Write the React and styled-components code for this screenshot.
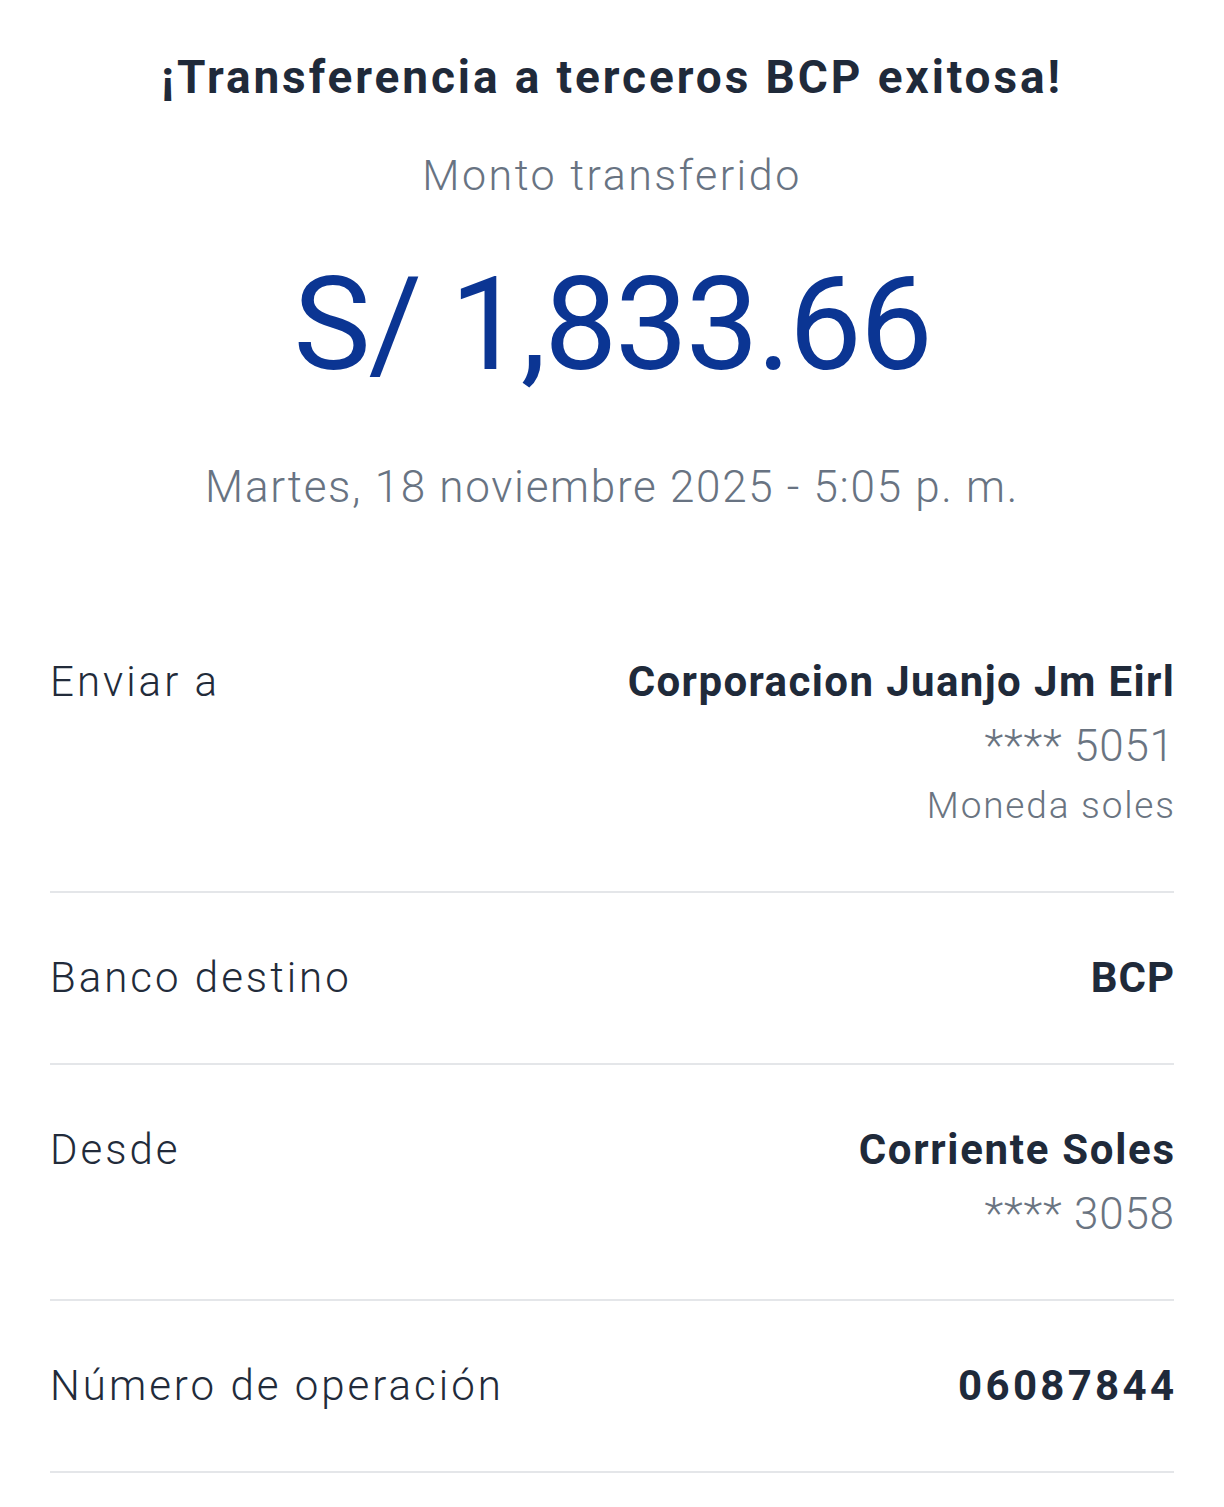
import styled, { createGlobalStyle } from "styled-components";

const GlobalStyle = createGlobalStyle`
  html, body {
    margin: 0;
    padding: 0;
    background: #ffffff;
  }
  body {
    font-family: Roboto, "Noto Sans", sans-serif;
    -webkit-font-smoothing: antialiased;
  }
`;

const Page = styled.main`
  width: 1224px;
  padding: 47px 50px 0;
  box-sizing: border-box;
  display: flex;
  flex-direction: column;
`;

const Head = styled.section`
  display: flex;
  flex-direction: column;
  align-items: center;
  text-align: center;
`;

const Title = styled.h1`
  margin: 0;
  font-size: 46px;
  line-height: 60px;
  font-weight: 700;
  color: #1f2a3a;
  letter-spacing: 2.9px;
`;

const Caption = styled.div`
  margin-top: ${(p) => p.$top}px;
  font-size: ${(p) => p.$size || 42}px;
  line-height: 60px;
  font-weight: 300;
  color: #687382;
  letter-spacing: ${(p) => p.$ls || 0}px;
`;

const Amount = styled.div`
  margin-top: 45px;
  font-size: 130px;
  line-height: 150px;
  font-weight: 400;
  color: #0b3593;
  letter-spacing: -2.2px;
`;

const List = styled.section`
  margin-top: 80px;
  display: flex;
  flex-direction: column;
`;

const Row = styled.div`
  display: flex;
  justify-content: space-between;
  align-items: flex-start;
  padding: 55px 0;
  border-bottom: 2px solid #e4e6e9;
`;

const Label = styled.div`
  font-size: 42px;
  line-height: 60px;
  font-weight: 300;
  color: #222b3a;
  letter-spacing: 3px;
`;

const Values = styled.div`
  display: flex;
  flex-direction: column;
  align-items: flex-end;
  text-align: right;
`;

const Strong = styled.div`
  font-size: 42px;
  line-height: 60px;
  font-weight: 700;
  color: #1f2a3a;
  letter-spacing: ${(p) => p.$ls}px;
  margin-right: -${(p) => p.$ls}px;
`;

const Masked = styled.div`
  margin-top: 4px;
  font-size: 44px;
  line-height: 60px;
  font-weight: 300;
  color: #6a7481;
  letter-spacing: 0.8px;
  margin-right: -0.8px;
`;

const Note = styled.div`
  font-size: 37px;
  line-height: 60px;
  font-weight: 300;
  color: #6a7481;
  letter-spacing: 1.8px;
  margin-right: -1.8px;
`;

const rows = [
  {
    label: "Enviar a",
    main: "Corporacion Juanjo Jm Eirl",
    ls: 1.4,
    masked: "**** 5051",
    note: "Moneda soles",
  },
  { label: "Banco destino", main: "BCP", ls: 1 },
  { label: "Desde", main: "Corriente Soles", ls: 1.7, masked: "**** 3058" },
  { label: "Número de operación", main: "06087844", ls: 3.3 },
];

const App = () => (
  <>
    <GlobalStyle />
    <Page>
      <Head>
        <Title>¡Transferencia a terceros BCP exitosa!</Title>
        <Caption $top={38} $size={43} $ls={2.5}>
          Monto transferido
        </Caption>
        <Amount>S/ 1,833.66</Amount>
        <Caption $top={57} $size={44} $ls={1.7}>
          Martes, 18 noviembre 2025 - 5:05 p. m.
        </Caption>
      </Head>
      <List>
        {rows.map((r) => (
          <Row key={r.label}>
            <Label>{r.label}</Label>
            <Values>
              <Strong $ls={r.ls}>{r.main}</Strong>
              {r.masked && <Masked>{r.masked}</Masked>}
              {r.note && <Note>{r.note}</Note>}
            </Values>
          </Row>
        ))}
      </List>
    </Page>
  </>
);

export default App;
